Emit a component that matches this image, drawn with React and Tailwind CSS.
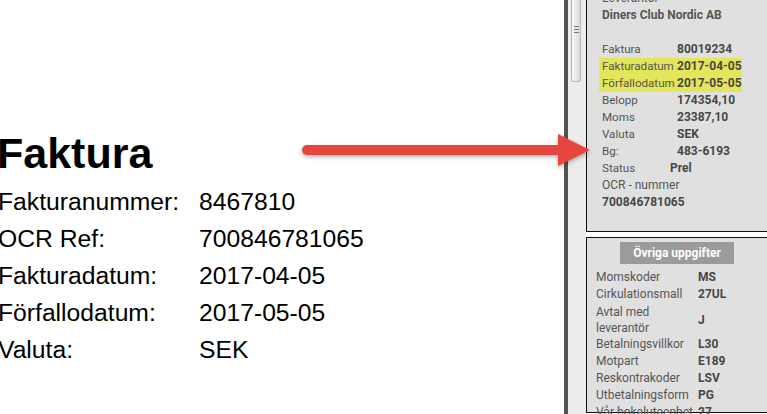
import React from "react";

const sideFont = { fontFamily: "Roboto, 'Liberation Sans', sans-serif" };

function Row1({ label, value, valueClass = "" }) {
  return (
    <div className="flex h-[17px] items-center leading-[17px]">
      <div className="w-[75px] shrink-0 whitespace-nowrap text-[11.6px] text-[#555]">{label}</div>
      <div className={"whitespace-nowrap font-bold text-[#474747] " + valueClass}>{value}</div>
    </div>
  );
}

function Row2({ label, value }) {
  return (
    <div className="flex h-[17px] items-center leading-[17px]">
      <div className="w-[102px] shrink-0 whitespace-nowrap text-[#555]">{label}</div>
      <div className="whitespace-nowrap font-bold text-[#474747]">{value}</div>
    </div>
  );
}

export default function App() {
  const rows = [
    ["Fakturanummer:", "8467810"],
    ["OCR Ref:", "700846781065"],
    ["Fakturadatum:", "2017-04-05"],
    ["Förfallodatum:", "2017-05-05"],
    ["Valuta:", "SEK"],
  ];
  return (
    <div className="relative flex h-[414px] w-[767px] overflow-hidden bg-white">
      {/* Left document */}
      <div
        className="w-[564px] shrink-0 pt-[129px] text-black"
        style={{ fontFamily: "'Liberation Sans', Arial, sans-serif" }}
      >
        <div className="ml-[-3px] h-[48px] text-[43px] font-bold leading-[48px]">Faktura</div>
        <div className="mt-[6px]">
          {rows.map(([l, v]) => (
            <div key={l} className="flex h-[37px] text-[24.7px] leading-[37px]">
              <div className="ml-[-2px] w-[201px] shrink-0 whitespace-nowrap">{l}</div>
              <div className="whitespace-nowrap">{v}</div>
            </div>
          ))}
        </div>
      </div>

      {/* dark divider */}
      <div className="w-[4px] shrink-0 bg-[#525252]" />

      {/* scrollbar */}
      <div className="relative w-[18px] shrink-0 bg-[#ececec]">
        <div className="ml-[3px] flex h-[82px] w-[10px] items-start justify-center rounded-b-[3px] border border-t-0 border-[#b5b5b5] bg-gradient-to-r from-[#f7f7f7] to-[#dcdcdc] pt-[26px]">
          <div className="flex flex-col gap-[2px]">
            <div className="h-px w-[5px] bg-[#777]" />
            <div className="h-px w-[5px] bg-[#777]" />
            <div className="h-px w-[5px] bg-[#777]" />
          </div>
        </div>
      </div>

      {/* side panels */}
      <div className="flex-1 text-[12px]" style={sideFont}>
        <div className="mt-[-10px] border-b border-l border-[#111] bg-[#e0e0e0] pb-[20px] pl-[15px]">
          <div className="h-[17px] leading-[17px] text-[#555]">Leverantör</div>
          <div className="h-[17px] whitespace-nowrap font-bold leading-[17px] text-[#555]">Diners Club Nordic AB</div>
          <div className="h-[17px]" />
          <Row1 label="Faktura" value="80019234" />
          <div className="ml-[-3px] w-[143px] bg-[#e3e55a] pl-[3px]">
            <Row1 label="Fakturadatum" value="2017-04-05" />
            <Row1 label="Förfallodatum" value="2017-05-05" />
          </div>
          <Row1 label="Belopp" value="174354,10" />
          <Row1 label="Moms" value="23387,10" />
          <Row1 label="Valuta" value="SEK" />
          <Row1 label="Bg:" value="483-6193" />
          <Row1 label="Status" value="Prel" valueClass="ml-[-7px]" />
          <div className="h-[17px] leading-[17px] text-[#555]">OCR - nummer</div>
          <div className="h-[17px] font-bold leading-[17px] text-[#474747]">700846781065</div>
        </div>

        <div className="mt-[5px] h-[176px] border-y border-l border-[#111] bg-[#e0e0e0] pl-[9px]">
          <div className="ml-[24px] mt-[4px] flex h-[22px] w-[114px] items-center justify-center bg-[#9b9b9b] text-[12px] font-bold text-white">
            Övriga uppgifter
          </div>
          <div className="mt-[5px]">
            <Row2 label="Momskoder" value="MS" />
            <Row2 label="Cirkulationsmall" value="27UL" />
            <div className="flex h-[33px] items-center">
              <div className="w-[102px] shrink-0 leading-[16px] text-[#555]">
                Avtal med
                <br />
                leverantör
              </div>
              <div className="font-bold text-[#474747]">J</div>
            </div>
            <Row2 label="Betalningsvillkor" value="L30" />
            <Row2 label="Motpart" value="E189" />
            <Row2 label="Reskontrakoder" value="LSV" />
            <Row2 label="Utbetalningsform" value="PG" />
            <Row2 label="Vår bokalutaenhet" value="27" />
          </div>
        </div>
      </div>

      {/* red arrow overlay */}
      <svg
        className="absolute left-0 top-0 drop-shadow-[0_2px_2px_rgba(0,0,0,0.3)]"
        width="767"
        height="414"
        viewBox="0 0 767 414"
      >
        <line x1="307" y1="150" x2="562" y2="150" stroke="#e5463d" strokeWidth="10" strokeLinecap="round" />
        <polygon points="558,134 590,150 558,166" fill="#e5463d" />
      </svg>
    </div>
  );
}
